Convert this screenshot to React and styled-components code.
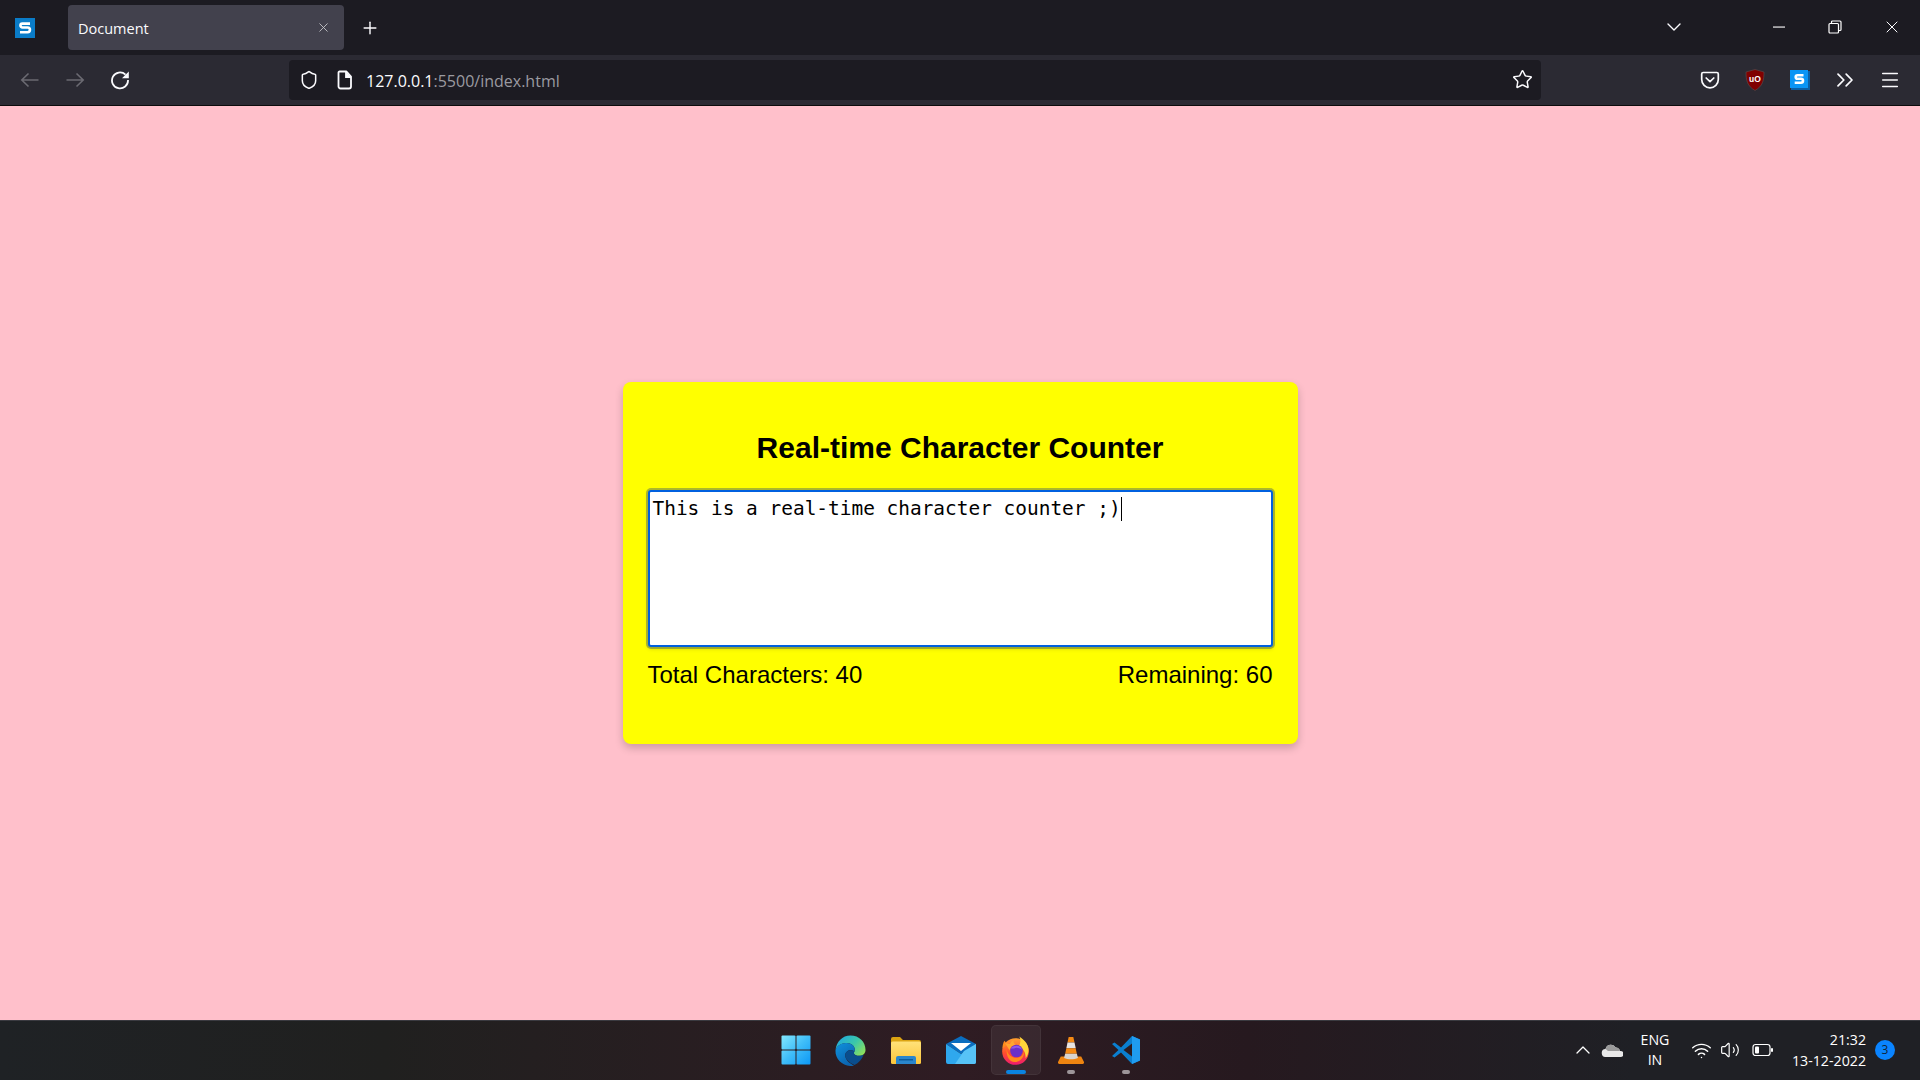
import React from "react";
import styled, { createGlobalStyle } from "styled-components";
import {
  ChevronDown,
  ChevronUp,
  ChevronsRight,
  Menu,
  Plus,
  Shield,
  Star,
  Volume2,
  Wifi,
  X,
} from "lucide-react";

const GlobalStyle = createGlobalStyle`
  html, body {
    margin: 0;
    padding: 0;
    height: 100%;
    overflow: hidden;
  }
  * {
    box-sizing: border-box;
  }
`;

const Screen = styled.div`
  width: 1920px;
  height: 1080px;
  display: flex;
  flex-direction: column;
  font-family: "Open Sans", "Noto Sans", sans-serif;
`;

/* browser chrome */
const TabStrip = styled.div`
  height: 55px;
  flex: none;
  display: flex;
  align-items: center;
  padding-left: 15px;
  background: #1c1b22;
  color: #fbfbfe;
`;
const Tab = styled.div`
  width: 276px;
  height: 45px;
  margin: 0 8px 0 33px;
  padding: 1px 13px 0 10px;
  display: flex;
  align-items: center;
  justify-content: space-between;
  border-radius: 4px;
  background: #42414d;
  font-size: 14.5px;
`;
const TabClose = styled.span`
  display: flex;
  margin-bottom: 2px;
  color: #c8c8cc;
`;
const NewTab = styled.span`
  width: 36px;
  display: flex;
  justify-content: center;
`;
const Spacer = styled.div`
  flex: 1;
`;
const TabList = styled.span`
  width: 40px;
  margin: 0 57px 2px 0;
  display: flex;
  justify-content: center;
`;
const WindowButton = styled.span`
  width: 56.5px;
  margin-bottom: 2px;
  display: flex;
  justify-content: center;
  align-items: center;
`;
const Toolbar = styled.div`
  height: 51px;
  flex: none;
  display: flex;
  align-items: center;
  padding: 0 8px 0 7px;
  background: #2b2a33;
  border-bottom: 1px solid #0c0c0d;
  color: #fbfbfe;
`;
const ToolButton = styled.span`
  width: 45px;
  display: flex;
  justify-content: center;
  align-items: center;
  color: ${(props) => (props.$dim ? "#6b6a72" : "#fbfbfe")};
`;
const UrlBar = styled.div`
  flex: 1;
  height: 40px;
  margin: 0 146px 1px 147px;
  padding: 0 8px 0 10px;
  display: flex;
  align-items: center;
  border-radius: 4px;
  background: #1c1b22;
`;
const UrlIcon = styled.span`
  width: ${(props) => props.$width}px;
  display: flex;
`;
const UrlText = styled.span`
  flex: 1;
  padding-top: 2px;
  font-size: 16px;
`;
const UrlHost = styled.span`
  color: #fbfbfe;
`;
const UrlRest = styled.span`
  color: #9a9aa0;
`;

/* page */
const Page = styled.main`
  flex: 1;
  display: flex;
  align-items: center;
  justify-content: center;
  background: #ffc0cb;
  font-family: "Liberation Sans", Arial, sans-serif;
  color: #000;
`;
const Card = styled.section`
  width: 675px;
  height: 362px;
  padding: 0 25px;
  display: flex;
  flex-direction: column;
  border-radius: 8px;
  background: #ffff00;
  box-shadow: 0 4px 8px rgba(0, 0, 0, 0.2);
`;
const Title = styled.h1`
  margin: 46px 0 22px;
  text-align: center;
  font-size: 30px;
  line-height: 40px;
  font-weight: 700;
`;
const Editor = styled.div`
  height: 157px;
  padding: 4px 3px;
  border: 2px solid #0060df;
  border-radius: 3px;
  background: #fff;
  box-shadow: 0 0 0 2px rgba(50, 80, 110, 0.4), 0 2px 4px rgba(0, 0, 0, 0.15);
  font-family: "DejaVu Sans Mono", "Liberation Mono", monospace;
  font-size: 19.45px;
  line-height: 26px;
  white-space: pre;
`;
const Caret = styled.span`
  display: inline-block;
  width: 1px;
  height: 24px;
  vertical-align: -6px;
  background: #000;
`;
const Stats = styled.div`
  margin-top: 13px;
  display: flex;
  justify-content: space-between;
  font-size: 24px;
  line-height: 30px;
`;

/* taskbar */
const Taskbar = styled.footer`
  height: 60px;
  flex: none;
  display: grid;
  grid-template-columns: 1fr auto 1fr;
  align-items: center;
  padding-bottom: 1px;
  border-top: 1px solid #3a3a40;
  background: linear-gradient(90deg, #1f2225 0%, #20201f 20%, #2f1c23 50%, #26191f 65%, #1f2025 85%);
  color: #fff;
`;
const Apps = styled.div`
  grid-column: 2;
  margin-left: 1px;
  display: flex;
  gap: 5px;
`;
const AppButton = styled.span`
  position: relative;
  width: 50px;
  height: 50px;
  display: flex;
  align-items: center;
  justify-content: center;
  border-radius: 5px;
  border: 1px solid ${(props) => (props.$active ? "rgba(255,255,255,0.05)" : "transparent")};
  background: ${(props) => (props.$active ? "rgba(255,255,255,0.06)" : "transparent")};
`;
const AppDot = styled.span`
  position: absolute;
  left: 50%;
  bottom: 0;
  height: 4px;
  width: ${(props) => (props.$active ? 20 : 8)}px;
  transform: translateX(-50%);
  border-radius: 2px;
  background: ${(props) => (props.$active ? "#0a84e0" : "#9d9599")};
`;
const Tray = styled.div`
  grid-column: 3;
  display: flex;
  align-items: center;
  justify-content: flex-end;
  font-size: 14.2px;
  line-height: 20px;
  color: #fff;
`;
const TrayIcon = styled.span`
  display: flex;
  justify-content: center;
  width: ${(props) => props.$width}px;
  margin-right: ${(props) => props.$gap || 0}px;
`;
const Lang = styled.div`
  width: 40px;
  margin-right: 15px;
  text-align: center;
`;
const Clock = styled.div`
  margin: 0 0 1px 17px;
  text-align: right;
  line-height: 21px;
`;
const Badge = styled.span`
  width: 20px;
  height: 20px;
  margin: 0 25px 0 9px;
  display: flex;
  align-items: center;
  justify-content: center;
  border-radius: 50%;
  background: #0a84ff;
  color: #10243a;
  font-size: 12px;
`;

const SLogo = ({ size = 20, color = "#0a7cc8" }) => (
  <svg width={size} height={size} viewBox="0 0 20 20">
    <rect width="20" height="20" fill={color} />
    <path d="M15 5.600H7.400a1.900 1.900 0 0 0 0 3.900h5.200a2.300 2.300 0 0 1 0 4.700H5" fill="none" stroke="#fff" strokeWidth="2.600" />
  </svg>
);

const BackIcon = () => (
  <svg width="20" height="20" viewBox="0 0 20 20" fill="none" stroke="currentColor" strokeWidth="1.600">
    <path d="M1.500 10h17M8.500 3.500L1.800 10l6.700 6.500" />
  </svg>
);

const ForwardIcon = () => (
  <svg width="20" height="20" viewBox="0 0 20 20" fill="none" stroke="currentColor" strokeWidth="1.600">
    <path d="M1.500 10h17M11.500 3.500l6.700 6.500-6.700 6.500" />
  </svg>
);

const ReloadIcon = () => (
  <svg width="20" height="20" viewBox="0 0 20 20" fill="none">
    <path d="M15.500 4.600A8 8 0 1 0 18 10" stroke="currentColor" strokeWidth="1.800" />
    <path d="M18.800 1.500v6.800H12z" fill="currentColor" />
  </svg>
);

const DocIcon = () => (
  <svg width="16" height="20" viewBox="0 0 16 20" fill="none" stroke="#fbfbfe" strokeWidth="1.800">
    <path d="M2.500 1.500h7l4.500 5v10a2 2 0 0 1-2 2H3.500a2 2 0 0 1-2-2v-14a1 1 0 0 1 1-1z" strokeLinejoin="round" />
    <path d="M9 1.500v5.500h5" fill="#fbfbfe" />
  </svg>
);

const RestoreIcon = () => (
  <svg width="14" height="14" viewBox="0 0 14 14" fill="none" stroke="#fff" strokeWidth="1.200">
    <rect x="1" y="3.500" width="9.500" height="9.500" rx="1" />
    <path d="M3.500 3.500v-1.500a1 1 0 0 1 1-1h7.500a1 1 0 0 1 1 1v7.500a1 1 0 0 1-1 1h-1.500" />
  </svg>
);

const MinimizeIcon = () => (
  <svg width="14" height="14" viewBox="0 0 14 14">
    <rect x="1" y="6.500" width="12" height="1.100" fill="#fff" />
  </svg>
);

const PocketIcon = () => (
  <svg width="20" height="20" viewBox="0 0 20 20" fill="none" stroke="#fbfbfe" strokeWidth="1.700">
    <path d="M3.200 2.500h13.600a1.500 1.500 0 0 1 1.500 1.500v5.500a8.300 8.300 0 0 1-16.600 0V4a1.500 1.500 0 0 1 1.500-1.500z" />
    <path d="M6.200 8l3.800 3.700L13.800 8" strokeLinecap="round" strokeLinejoin="round" />
  </svg>
);

const UblockIcon = () => (
  <svg width="20" height="22" viewBox="0 0 20 22">
    <path d="M10 .5L19 3c0 8-1 14-9 18.500C2 17 1 11 1 3z" fill="#800000" stroke="#5a5050" strokeWidth=".6" />
    <text x="10" y="12.500" textAnchor="middle" fontSize="8.500" fontWeight="700" fill="#fff" fontFamily="Liberation Sans, sans-serif">uO</text>
  </svg>
);

const SkypeLikeIcon = () => (
  <svg width="20" height="20" viewBox="0 0 20 20">
    <rect x="1" y="1" width="19" height="19" fill="#0b5fa5" />
    <rect width="18" height="18" fill="#0a95f5" />
    <path d="M13.500 5.200H7.500a1.800 1.800 0 0 0 0 3.600h3.500a2 2 0 0 1 0 4H4.700" fill="none" stroke="#fff" strokeWidth="2.600" />
  </svg>
);

const WindowsIcon = () => (
  <svg width="30" height="30" viewBox="0 0 30 30">
    <defs>
      <linearGradient id="win" gradientUnits="userSpaceOnUse" x1="0" y1="0" x2="30" y2="30">
        <stop offset="0" stopColor="#86eaff" />
        <stop offset="0.500" stopColor="#3fbdf8" />
        <stop offset="1" stopColor="#0a96f5" />
      </linearGradient>
    </defs>
    <rect x="0.500" y="0.500" width="14" height="14" rx="1" fill="url(#win)" />
    <rect x="15.500" y="0.500" width="14" height="14" rx="1" fill="url(#win)" />
    <rect x="0.500" y="15.500" width="14" height="14" rx="1" fill="url(#win)" />
    <rect x="15.500" y="15.500" width="14" height="14" rx="1" fill="url(#win)" />
  </svg>
);

const EdgeIcon = () => (
  <svg width="31" height="31" viewBox="0 0 32 32">
    <defs>
      <linearGradient id="edgeA" x1="0" y1="0.200" x2="1" y2="0.800">
        <stop offset="0" stopColor="#1fa8e0" />
        <stop offset="0.550" stopColor="#3cc8a8" />
        <stop offset="1" stopColor="#8fe05a" />
      </linearGradient>
      <linearGradient id="edgeB" x1="0" y1="0" x2="0.600" y2="1">
        <stop offset="0" stopColor="#0f93de" />
        <stop offset="1" stopColor="#0b62ad" />
      </linearGradient>
    </defs>
    <path d="M16 .5C25 .5 31.500 7 31.500 15.500c0 3.500-2.500 6-6.500 6-3.200 0-5.500-1.200-5.500-3 0-1 1-1.500 1-3.200 0-3.800-3.500-7-8.500-7C6.500 8.300 1.800 11.500.6 15.500 1.500 7 7.500 .5 16 .5z" fill="url(#edgeA)" />
    <path d="M.5 16C1.200 11.500 6.500 8 12 8.300c5 0 8.500 3.200 8.500 7 0 .6-.2 1-.4 1.400-4.500-2.500-9.500-.5-9.500 4.300 0 4 3.500 8 9 10.500-1.300.4-2.600.5-4 .5C7.500 31.500 0 24.500.5 16z" fill="url(#edgeB)" />
    <path d="M10.600 21c0-4.800 5-6.800 9.500-4.300-.3.700-.6 1.200-.6 1.800 0 1.800 2.300 3 5.500 3 1.500 0 3-.3 4.500-1-1.500 4.500-5 8.500-9.400 10.500-5-2-9.500-6-9.500-10z" fill="#0a4d8c" />
  </svg>
);

const FolderIcon = () => (
  <svg width="30" height="27" viewBox="0 0 30 27">
    <defs>
      <linearGradient id="folder" x1="0" y1="0" x2="0" y2="1">
        <stop offset="0" stopColor="#ffe27a" />
        <stop offset="1" stopColor="#fcc53a" />
      </linearGradient>
    </defs>
    <path d="M0 2a2 2 0 0 1 2-2h7l3 3h16a2 2 0 0 1 2 2v4H0z" fill="#dca412" />
    <rect y="4.500" width="30" height="22.500" rx="1.500" fill="url(#folder)" />
    <path d="M5 27v-6a2 2 0 0 1 2-2h16a2 2 0 0 1 2 2v6z" fill="#2a86cc" />
    <rect x="8" y="22" width="14" height="1.500" fill="#0d5c9c" />
  </svg>
);

const MailIcon = () => (
  <svg width="30" height="28" viewBox="0 0 30 28">
    <path d="M0 8L15 0l15 8-15 10z" fill="#0a6dbf" />
    <path d="M5 7h20l-10 8z" fill="#fff" />
    <path d="M0 8l15 10 15-10v18a2 2 0 0 1-2 2H2a2 2 0 0 1-2-2z" fill="#2fa8ee" />
    <path d="M30 26a2 2 0 0 1-2 2H9l9-13 12-7z" fill="#57c3f7" />
  </svg>
);

const FirefoxIcon = () => (
  <svg width="29" height="29" viewBox="0 0 30 30">
    <defs>
      <linearGradient id="ff" x1="0.500" y1="0" x2="0.500" y2="1">
        <stop offset="0" stopColor="#ffa22e" />
        <stop offset="0.550" stopColor="#ff4f2c" />
        <stop offset="1" stopColor="#ee1a70" />
      </linearGradient>
    </defs>
    <circle cx="15" cy="16" r="13.800" fill="url(#ff)" />
    <path d="M1.500 13c0-3 .8-6 2-8 1 1 2 2.500 2.500 4z" fill="#ff8a1c" />
    <path d="M19 .5c2 2 9.500 6 9.500 14 0 3-1 6-3 8.500 .5-6-3-11-7-12.500 2-3 2-7 .5-10z" fill="#ffd53a" />
    <path d="M4 7c2 1 4 1.500 5.500 1 1-2 2-3 3.500-3.500-.5 2 .5 3.500 2 4.500-3 .5-6 3-6 6z" fill="#ffa62e" />
    <circle cx="16" cy="15.500" r="6.500" fill="#6a2fc8" />
    <path d="M10 13c2-3 7-4 10-1.500 1 1 1.500 2 1.500 3-2-2-6-3-8-1.500z" fill="#9058e8" />
    <path d="M6 14c1 6 6 9 11 8.500 4-.5 6-3 6.500-6.500 1 6-4 11-9.500 11C9 27 5 21 6 14z" fill="#ff8a1c" />
  </svg>
);

const VlcIcon = () => (
  <svg width="26" height="28" viewBox="0 0 28 30">
    <path d="M3 22h22l3 6a1.500 1.500 0 0 1-1.500 2h-25A1.500 1.500 0 0 1 0 28z" fill="#ee8410" />
    <path d="M11.500 1h5l1.300 6h-7.600z" fill="#f58a14" />
    <path d="M10.200 7h7.600l1.300 6H9z" fill="#e8e4e0" />
    <path d="M9 13h10l1.300 6H7.700z" fill="#f58a14" />
    <path d="M7.700 19h12.600l1.200 4.500c-4 2-11 2-15 0z" fill="#d9d4cf" />
  </svg>
);

const VsCodeIcon = () => (
  <svg width="30" height="30" viewBox="0 0 30 30">
    <path d="M21 1L10 12.500 3.500 7.500 1 9l6.500 6L1 21l2.500 1.500L10 17.500 21 29l8-3.500v-21z" fill="#0a7fd0" />
    <path d="M21 1l8 3.500v21L21 29V1z" fill="#1f9cf0" />
    <path d="M21 8.500L12.500 15l8.500 6.500z" fill="#2b1c22" />
  </svg>
);

const CloudIcon = () => (
  <svg width="22" height="14" viewBox="0 0 22 14">
    <path d="M5 14a4 4 0 0 1-.5-8 5.500 5.500 0 0 1 10.200-1.500A4.500 4.500 0 0 1 19 8h.5a3 3 0 0 1 0 6z" fill="#e9e9e9" />
    <path d="M4.500 6a5.500 5.500 0 0 1 10.200-1.500A4.500 4.500 0 0 1 19 8H7z" fill="#9a9a9a" />
  </svg>
);

const BatteryIcon = () => (
  <svg width="22" height="14" viewBox="0 0 22 14" fill="none">
    <rect x="1" y="1.500" width="17" height="11" rx="2.500" stroke="#fff" strokeWidth="1.200" />
    <rect x="3" y="3.500" width="4" height="7" rx="1" fill="#fff" />
    <rect x="19" y="5" width="2" height="4" rx="1" fill="#fff" />
  </svg>
);

const apps = [
  { key: "start", icon: <WindowsIcon /> },
  { key: "edge", icon: <EdgeIcon /> },
  { key: "files", icon: <FolderIcon /> },
  { key: "mail", icon: <MailIcon /> },
  { key: "firefox", icon: <FirefoxIcon />, active: true, dot: true },
  { key: "vlc", icon: <VlcIcon />, dot: true },
  { key: "code", icon: <VsCodeIcon />, dot: true },
];

export default function App() {
  return (
    <Screen>
      <GlobalStyle />
      <TabStrip>
        <SLogo />
        <Tab>
          Document
          <TabClose>
            <X size={15} strokeWidth={1.4} />
          </TabClose>
        </Tab>
        <NewTab>
          <Plus size={20} strokeWidth={1.7} />
        </NewTab>
        <Spacer />
        <TabList>
          <ChevronDown size={24} strokeWidth={1.4} />
        </TabList>
        <WindowButton>
          <MinimizeIcon />
        </WindowButton>
        <WindowButton>
          <RestoreIcon />
        </WindowButton>
        <WindowButton>
          <X size={20} strokeWidth={1.2} />
        </WindowButton>
      </TabStrip>
      <Toolbar>
        <ToolButton $dim>
          <BackIcon />
        </ToolButton>
        <ToolButton $dim>
          <ForwardIcon />
        </ToolButton>
        <ToolButton>
          <ReloadIcon />
        </ToolButton>
        <UrlBar>
          <UrlIcon $width={38}>
            <Shield size={20} strokeWidth={1.8} />
          </UrlIcon>
          <UrlIcon $width={29}>
            <DocIcon />
          </UrlIcon>
          <UrlText>
            <UrlHost>127.0.0.1</UrlHost>
            <UrlRest>:5500/index.html</UrlRest>
          </UrlText>
          <Star size={21} strokeWidth={1.7} />
        </UrlBar>
        <ToolButton>
          <PocketIcon />
        </ToolButton>
        <ToolButton>
          <UblockIcon />
        </ToolButton>
        <ToolButton>
          <SkypeLikeIcon />
        </ToolButton>
        <ToolButton>
          <ChevronsRight size={28} strokeWidth={1.5} />
        </ToolButton>
        <ToolButton>
          <Menu size={22} strokeWidth={1.6} />
        </ToolButton>
      </Toolbar>
      <Page>
        <Card>
          <Title>Real-time Character Counter</Title>
          <Editor>
            This is a real-time character counter ;)
            <Caret />
          </Editor>
          <Stats>
            <span>Total Characters: 40</span>
            <span>Remaining: 60</span>
          </Stats>
        </Card>
      </Page>
      <Taskbar>
        <Apps>
          {apps.map((app) => (
            <AppButton key={app.key} $active={app.active}>
              {app.icon}
              {app.dot && <AppDot $active={app.active} />}
            </AppButton>
          ))}
        </Apps>
        <Tray>
          <TrayIcon $width={24} $gap={5}>
            <ChevronUp size={24} strokeWidth={1.3} />
          </TrayIcon>
          <TrayIcon $width={24} $gap={11}>
            <CloudIcon />
          </TrayIcon>
          <Lang>
            ENG
            <br />
            IN
          </Lang>
          <TrayIcon $width={24} $gap={4.5}>
            <Wifi size={21} strokeWidth={1.7} />
          </TrayIcon>
          <TrayIcon $width={24} $gap={8.5}>
            <Volume2 size={20} strokeWidth={1.4} />
          </TrayIcon>
          <TrayIcon $width={24}>
            <BatteryIcon />
          </TrayIcon>
          <Clock>
            21:32
            <br />
            13-12-2022
          </Clock>
          <Badge>3</Badge>
        </Tray>
      </Taskbar>
    </Screen>
  );
}
